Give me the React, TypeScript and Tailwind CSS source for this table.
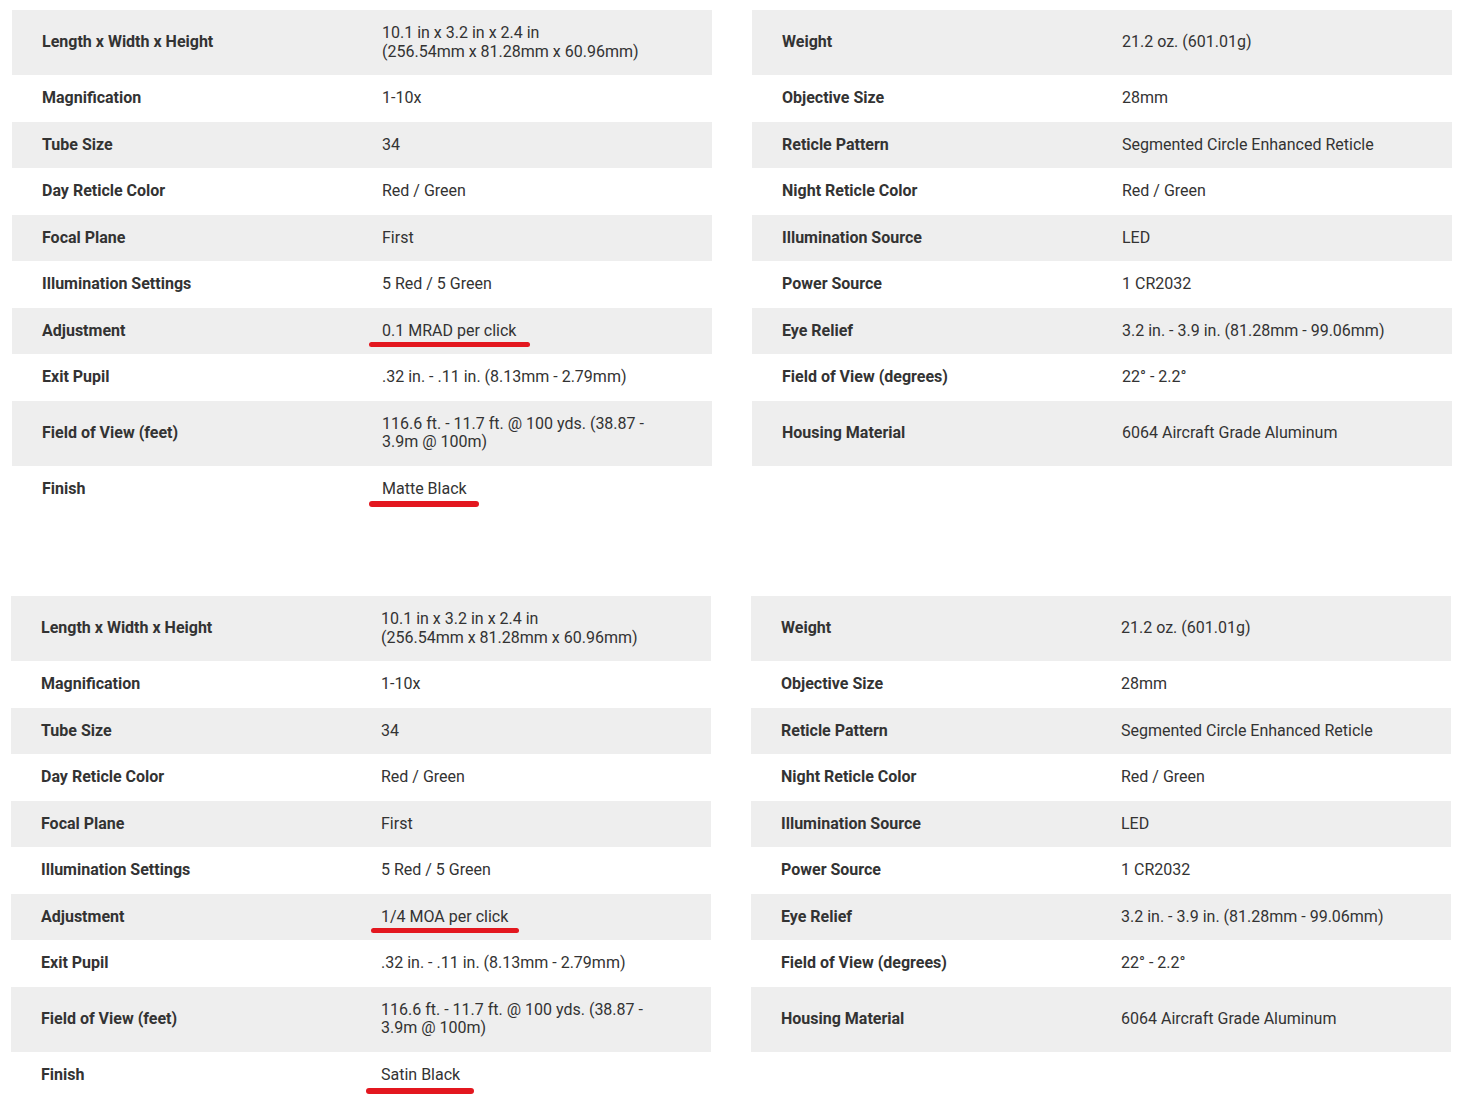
import React from "react";

type Mark = { left: number; width: number; top: number; height: number };
type Cell = { label: string; value: React.ReactNode; mark?: Mark };
type Row = { left: Cell; right?: Cell; tall?: boolean };

const dims = (
  <>
    10.1 in x 3.2 in x 2.4 in
    <br />
    (256.54mm x 81.28mm x 60.96mm)
  </>
);

function buildRows(adjust: string, adjustMark: Mark, finish: string, finishMark: Mark): Row[] {
  return [
    { left: { label: "Length x Width x Height", value: dims }, right: { label: "Weight", value: "21.2 oz. (601.01g)" }, tall: true },
    { left: { label: "Magnification", value: "1-10x" }, right: { label: "Objective Size", value: "28mm" } },
    { left: { label: "Tube Size", value: "34" }, right: { label: "Reticle Pattern", value: "Segmented Circle Enhanced Reticle" } },
    { left: { label: "Day Reticle Color", value: "Red / Green" }, right: { label: "Night Reticle Color", value: "Red / Green" } },
    { left: { label: "Focal Plane", value: "First" }, right: { label: "Illumination Source", value: "LED" } },
    { left: { label: "Illumination Settings", value: "5 Red / 5 Green" }, right: { label: "Power Source", value: "1 CR2032" } },
    { left: { label: "Adjustment", value: adjust, mark: adjustMark }, right: { label: "Eye Relief", value: "3.2 in. - 3.9 in. (81.28mm - 99.06mm)" } },
    { left: { label: "Exit Pupil", value: ".32 in. - .11 in. (8.13mm - 2.79mm)" }, right: { label: "Field of View (degrees)", value: "22° - 2.2°" } },
    { left: { label: "Field of View (feet)", value: "116.6 ft. - 11.7 ft. @ 100 yds. (38.87 - 3.9m @ 100m)" }, right: { label: "Housing Material", value: "6064 Aircraft Grade Aluminum" }, tall: true },
    { left: { label: "Finish", value: finish, mark: finishMark } },
  ];
}

function SpecCell({ cell, shaded }: { cell?: Cell; shaded: boolean }) {
  return (
    <div className={`flex items-center py-[14px] ${shaded ? "bg-[#eeeeee]" : "bg-white"}`}>
      {cell && (
        <>
          <div className="w-[350px] pl-[30px] pr-4 font-bold text-[#333333]">{cell.label}</div>
          <div className="w-[350px] pl-[20px] pr-[56px] text-[#333333]">
            <div className="relative">
              {cell.value}
              {cell.mark && (
                <span
                  className="absolute rounded-full bg-[#e3171f]"
                  style={{ left: cell.mark.left, width: cell.mark.width, top: cell.mark.top, height: cell.mark.height }}
                />
              )}
            </div>
          </div>
        </>
      )}
    </div>
  );
}

function SpecSet({ rows, offset }: { rows: Row[]; offset: string }) {
  return (
    <div className={`flex flex-col ${offset}`}>
      {rows.map((row, i) => (
        <div key={i} className={`grid grid-cols-[700px_700px] gap-x-[40px] ${row.tall ? "min-h-[65px]" : ""}`}>
          <SpecCell cell={row.left} shaded={i % 2 === 0} />
          <SpecCell cell={row.right} shaded={i % 2 === 0 && !!row.right} />
        </div>
      ))}
    </div>
  );
}

export default function App() {
  const top = buildRows(
    "0.1 MRAD per click",
    { left: -13, width: 161, top: 20.5, height: 5 },
    "Matte Black",
    { left: -13, width: 110, top: 21.5, height: 6 }
  );
  const bottom = buildRows(
    "1/4 MOA per click",
    { left: -10, width: 148, top: 20.5, height: 5 },
    "Satin Black",
    { left: -15, width: 108, top: 22.5, height: 6 }
  );

  return (
    <div
      className="min-h-[1110px] w-[1470px] bg-white pt-[10px] text-[16px] leading-[18.5px]"
      style={{ fontFamily: "Roboto, 'Liberation Sans', sans-serif" }}
    >
      <SpecSet rows={top} offset="ml-[12px]" />
      <div className="h-[84px]" />
      <SpecSet rows={bottom} offset="ml-[11px]" />
    </div>
  );
}
